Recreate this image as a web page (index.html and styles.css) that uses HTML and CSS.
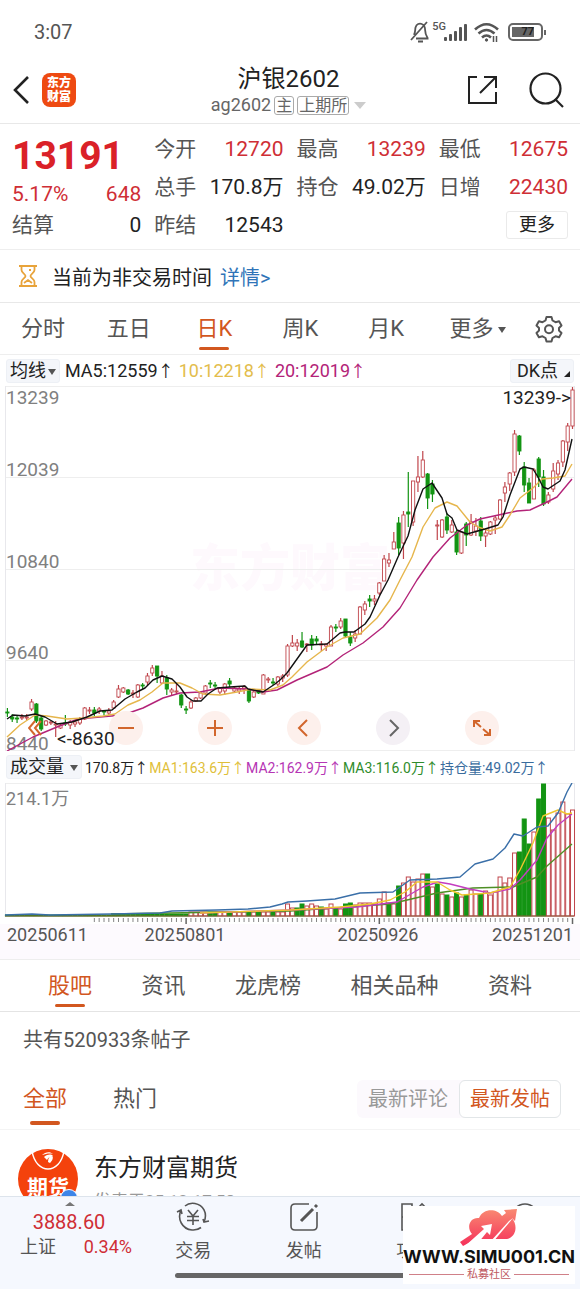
FILE: index.html
```html
<!DOCTYPE html>
<html lang="zh-CN">
<head>
    <meta charset="UTF-8">
    <meta name="viewport" content="width=device-width, initial-scale=1.0">
    <title>沪银2602</title>
    <link rel="stylesheet" href="styles.css">
</head>
<body>
    <div class="status-bar">
        <span class="clock">3:07</span>
        <div class="status-icons">
            <svg width="20" height="24" viewBox="0 0 20 24" fill="none" stroke="#555" stroke-width="1.8">
                <path d="M6 18.500h12.500M4 15c1.500-3 1-5 1.500-7.500 1-3.500 4-4.500 6.300-3.500 2.500 1 3.300 3 3.300 6 0 3 .5 5 2.700 8.500M1 20L17 2M8 21.500h5"/>
            </svg>
            <span class="net">5G</span>
            <svg width="23" height="17" viewBox="0 0 23 17" fill="#555">
                <rect x="0" y="13" width="3" height="4" rx="1"/><rect x="5" y="10" width="3" height="7" rx="1"/><rect x="10" y="7" width="3" height="10" rx="1"/><rect x="15" y="3" width="3" height="14" rx="1"/><rect x="20" y="0" width="3" height="17" rx="1"/>
            </svg>
            <svg class="wifi" width="26" height="21" viewBox="0 0 26 21" fill="none" stroke="#555" stroke-width="2.600">
                <path d="M1 7.500Q12.500-3 24 7.500M4.500 11.500q8-7 16 0M8 15.500q4.500-4 9 0"/><circle cx="12.500" cy="18" r="1.200" fill="#555" stroke-width="1"/><path d="M19.500 14v6M22.500 14v6" stroke-width="1.500"/>
            </svg>
            <span class="battery"><span class="battery-level">77</span></span>
        </div>
    </div>

    <header class="header">
        <div class="header-left">
            <button class="icon-btn" aria-label="返回">
                <svg width="17" height="28" viewBox="0 0 17 28" fill="none" stroke="#222" stroke-width="2.600"><path d="M15 1L2 14l13 13"/></svg>
            </button>
            <div class="app-logo">东方<br>财富</div>
        </div>
        <div class="header-title">
            <h1>沪银2602</h1>
            <div class="contract">ag2602<span class="tag">主</span><span class="tag">上期所</span><span class="drop"></span></div>
        </div>
        <div class="header-right">
            <button class="icon-btn" aria-label="分享">
                <svg width="30" height="30" viewBox="0 0 30 30" fill="none" stroke="#222" stroke-width="2"><path d="M9 2H1v26h27V17M12 18L27 3M16 2h12v11"/></svg>
            </button>
            <button class="icon-btn" aria-label="搜索">
                <svg width="35" height="36" viewBox="0 0 35 36" fill="none" stroke="#222" stroke-width="2.200"><circle cx="16.500" cy="16.500" r="15"/><path d="M26 27l8 8"/></svg>
            </button>
        </div>
    </header>

    <section class="quote">
        <div class="quote-main">
            <div class="price">13191</div>
            <div class="cell up"><span>5.17%</span><span>648</span></div>
            <div class="cell"><span class="name">结算</span><span>0</span></div>
        </div>
        <div class="quote-col">
            <div class="cell"><span class="name">今开</span><span class="up">12720</span></div>
            <div class="cell"><span class="name">总手</span><span>170.8万</span></div>
            <div class="cell"><span class="name">昨结</span><span>12543</span></div>
        </div>
        <div class="quote-col">
            <div class="cell"><span class="name">最高</span><span class="up">13239</span></div>
            <div class="cell"><span class="name">持仓</span><span>49.02万</span></div>
        </div>
        <div class="quote-col">
            <div class="cell"><span class="name">最低</span><span class="up">12675</span></div>
            <div class="cell"><span class="name">日增</span><span class="up">22430</span></div>
            <div class="cell cell-end"><button class="more-btn">更多</button></div>
        </div>
    </section>

    <div class="notice">
        <svg width="20" height="22" viewBox="0 0 20 22" fill="none" stroke="#e8a33a" stroke-width="1.800">
            <path d="M1 1h18M1 21h18M3.500 1v4c0 3 4 4 4 6s-4 3-4 6v4M16.500 1v4c0 3-4 4-4 6s4 3 4 6v4M6 18l4-3 4 3M11 5h2"/>
        </svg>
        <span>当前为非交易时间</span>
        <a href="#">详情&gt;</a>
    </div>

    <nav class="period-tabs">
        <button class="tab">分时</button>
        <button class="tab">五日</button>
        <button class="tab active">日K</button>
        <button class="tab">周K</button>
        <button class="tab">月K</button>
        <button class="tab">更多<span class="caret"></span></button>
        <button class="icon-btn" aria-label="设置">
            <svg width="28" height="28" viewBox="0 0 28 28" fill="none" stroke="#555" stroke-width="2" stroke-linejoin="round">
                <path d="M11.500 2h5l1 3.500 3 1.700 3.600-1L26.500 10.500 24 13v2.500l2.500 2.500-2.400 4.300-3.600-1-3 1.700-1 3.500h-5l-1-3.500-3-1.700-3.600 1L1.500 18 4 15.500V13L1.500 10.500l2.400-4.300 3.600 1 3-1.700z"/><circle cx="14" cy="14.200" r="4"/>
            </svg>
        </button>
    </nav>

    <div class="ma-row">
        <button class="pill">均线<span class="caret"></span></button>
        <span class="ma">MA5:12559<i>↑</i></span>
        <span class="ma ma-yellow">10:12218<i>↑</i></span>
        <span class="ma ma-pink">20:12019<i>↑</i></span>
        <button class="pill pill-dk">DK点<span class="corner"></span></button>
    </div>

    <div class="chart price-chart">
        <div class="chart-brand">东方财富</div>
        <div class="price-axis">
            <div><span>13239</span><span>12039</span></div>
            <div><span>10840</span></div>
            <div><span>9640</span></div>
            <div><span>8440</span></div>
        </div>
        <svg id="priceChart" width="100%" height="365" viewBox="0 0 580 365" preserveAspectRatio="none"></svg>
        <div class="chart-tools">
            <button class="tool tool-plain" aria-label="展开"><svg width="14" height="16" viewBox="0 0 14 16"><path d="M7 1L1 8l6 7M13 1L7 8l6 7"/></svg></button>
            <button class="tool" aria-label="缩小"><svg width="18" height="18" viewBox="0 0 18 18"><path d="M1 9h16"/></svg></button>
            <button class="tool" aria-label="放大"><svg width="18" height="18" viewBox="0 0 18 18"><path d="M1 9h16M9 1v16"/></svg></button>
            <button class="tool" aria-label="左移"><svg width="18" height="18" viewBox="0 0 18 18"><path d="M12 1L4 9l8 8"/></svg></button>
            <button class="tool tool-off" aria-label="右移"><svg width="18" height="18" viewBox="0 0 18 18"><path d="M6 1l8 8-8 8"/></svg></button>
            <button class="tool" aria-label="全屏"><svg width="18" height="18" viewBox="0 0 18 18"><path d="M1 8V2h6M1 2l7 6M17 10v6h-6M17 16l-7-6"/></svg></button>
        </div>
        <span class="mark mark-high">13239-&gt;</span>
        <span class="mark mark-low">&lt;-8630</span>
    </div>

    <div class="vol-row">
        <button class="pill">成交量<span class="caret"></span></button>
        <span>170.8万<i>↑</i></span>
        <span class="v-yellow">MA1:163.6万<i>↑</i></span>
        <span class="v-pink">MA2:162.9万<i>↑</i></span>
        <span class="v-green">MA3:116.0万<i>↑</i></span>
        <span class="v-blue">持仓量:49.02万<i>↑</i></span>
    </div>

    <div class="chart vol-chart">
        <span class="vol-max">214.1万</span>
        <svg id="volChart" width="100%" height="141" viewBox="0 0 580 141" preserveAspectRatio="none"></svg>
    </div>
    <div class="dates">
        <span>20250611</span><span>20250801</span><span>20250926</span><span>20251201</span>
    </div>

    <nav class="forum-tabs">
        <button class="tab active">股吧</button>
        <button class="tab">资讯</button>
        <button class="tab">龙虎榜</button>
        <button class="tab">相关品种</button>
        <button class="tab">资料</button>
    </nav>

    <p class="post-count">共有520933条帖子</p>

    <div class="filter">
        <button class="tab active">全部</button>
        <button class="tab">热门</button>
        <div class="sort">
            <button>最新评论</button>
            <button class="selected">最新发帖</button>
        </div>
    </div>

    <article class="post">
        <div class="avatar">
            <svg width="60" height="60" viewBox="0 0 60 60">
                <circle cx="30" cy="30" r="30" fill="#f4420c"/>
                <path d="M14 2c4 24 28 24 32 0" fill="none" stroke="#fff" stroke-width="1.500"/>
                <path d="M24 6c3-3 8-4 11-1-4-1-7 0-11 1zM26 8c4-3 7-3 9-1-3 0-5 2-6 4zM30 13c0-4 2-6 4-7 2 3 0 6-2 8z" fill="#fff"/>
            </svg>
            <span class="avatar-text">期货</span>
            <span class="badge"></span>
        </div>
        <div>
            <h2>东方财富期货</h2>
            <p>发表于25-12-17:58</p>
        </div>
    </article>

    <footer class="bottom-bar">
        <div class="index">
            <span class="index-caret"></span>
            <div class="index-value">3888.60</div>
            <div class="index-line"><span class="name">上证</span><span class="up">0.34%</span></div>
        </div>
        <button class="action">
            <svg width="34" height="30" viewBox="0 0 34 30"><path d="M5 8C1 17 6 27 16 28q5 .5 9-2.500M28 20c4-9-1-17-9-18.500Q13 .5 9 4M1 10l4-2 1 4M27 17l1 3 5-1M12 8l5 6 5-6M11 14.500h12M11 18.500h12M17 14v9"/></svg>
            <span>交易</span>
        </button>
        <button class="action">
            <svg width="34" height="30" viewBox="0 0 34 30"><path d="M22 2H8Q4 2 4 6v18q0 4 4 4h18q4 0 4-4V10"/><path d="M14 19L26 7M28 5l2-2" stroke-width="3"/></svg>
            <span>发帖</span>
        </button>
        <button class="action">
            <svg width="34" height="30" viewBox="0 0 34 30"><path d="M15 14V2H5v26h10V17M5 15h24v12H19V15M20 7l5-5 5 5-5 5z"/></svg>
            <span>功能</span>
        </button>
        <button class="action" aria-label="我的">
            <svg width="34" height="30" viewBox="0 0 34 30"><circle cx="17" cy="15" r="13"/></svg>
        </button>
        <span class="home-bar"></span>
        <div class="site-mark">
            <svg width="60" height="38" viewBox="0 0 60 38">
                <defs>
                    <linearGradient id="cloud" x1="0" y1="0" x2="0" y2="1"><stop offset="0" stop-color="#f98a72"/><stop offset="1" stop-color="#f5305a"/></linearGradient>
                </defs>
                <path d="M13 26C7 19 11 9 20 10 24 0 38 0 43 8L47 5 45 2 58 1 56 13 53 10C60 19 56 31 46 31H17L4 38 1 34z" fill="url(#cloud)"/>
                <path d="M6 38L25 21l-3-3 11-2-2 11-3-3-9 11zM31 34L50 13l4-3-20 24z" fill="#fff"/>
            </svg>
            <div class="site-url">WWW.SIMU001.CN</div>
            <div class="site-name">私募社区</div>
        </div>
    </footer>

    <script src="chart.js"></script>
</body>
</html>
```

FILE: styles.css
```css
* { box-sizing: border-box; }
body { margin: 0; background: #fff; color: #222; font-family: Roboto, "Noto Sans CJK SC", sans-serif; font-size: 20px; }
button { background: none; border: none; padding: 0; margin: 0; font: inherit; color: inherit; }
h1, h2, p { margin: 0; font-weight: 400; }
i { font-family: "Noto Sans CJK SC", sans-serif; font-size: 16px; font-style: normal; }
svg { display: block; }
.icon-btn { display: flex; justify-content: center; }
.up { color: #cf2e35; }
.name { color: #555; }

/* status bar */
.status-bar { display: flex; justify-content: space-between; align-items: center; height: 64px; padding: 0 34px; color: #555; }
.status-icons { display: flex; align-items: center; }
.net { font-size: 11px; font-weight: 500; align-self: flex-start; margin: 0 -2px 0 2px; }
.wifi { margin: 0 8px 0 7px; }
.battery { position: relative; width: 35px; height: 18px; border: 2px solid #666; border-radius: 5px; padding: 2px; margin-right: 3px; }
.battery::after { content: ""; position: absolute; right: -5px; top: 5px; width: 2px; height: 5px; background: #666; }
.battery-level { display: block; width: 22px; height: 10px; background: #666; color: #222; font-size: 11px; font-weight: 700; line-height: 10px; text-align: right; }

/* header */
.header { display: grid; grid-template-columns: 1fr auto 1fr; align-items: center; height: 60px; padding: 0 16px 8px 13px; border-bottom: 1px solid #e8e8e8; }
.header-left { display: flex; align-items: center; gap: 12px; }
.app-logo { width: 34px; height: 34px; border-radius: 8px; background: #ee4a12; color: #fff; font-size: 12px; font-weight: 900; line-height: 14px; text-align: center; padding-top: 3px; }
.header-title { text-align: center; }
.header-title h1 { font-size: 24px; line-height: 30px; }
.contract { display: flex; align-items: center; gap: 3px; font-size: 18px; line-height: 22px; color: #666; }
.tag { border: 1px solid #aaa; border-radius: 3px; font-size: 16px; line-height: 17px; padding: 0 1px; }
.drop { border: 6px solid transparent; border-top: 7px solid #ccc; border-bottom: 0; margin-left: 2px; }
.header-right { display: flex; justify-content: flex-end; align-items: center; gap: 31px; }

/* quote */
.quote { display: grid; grid-template-columns: repeat(4, 1fr); gap: 13px; padding: 6px 12px 5px; font-size: 21px; line-height: 26px; border-bottom: 1px solid #eee; }
.quote-main { display: grid; grid-template-rows: 52px 24px 38px; }
.quote-col { display: grid; grid-template-rows: repeat(3, 38px); }
.price { font-size: 39px; font-weight: 700; line-height: 52px; color: #da2128; }
.cell { display: flex; justify-content: space-between; align-items: center; white-space: nowrap; }
.cell-end { justify-content: flex-end; }
.more-btn { width: 62px; height: 28px; border: 1px solid #eaeaea; border-radius: 3px; font-size: 18px; line-height: 24px; }

.notice { display: flex; align-items: center; height: 53px; padding: 0 18px; border-bottom: 1px solid #e8e8e8; }
.notice span { margin: 0 8px 0 14px; }
.notice a { color: #2f74b8; text-decoration: none; }

/* tabs */
.tab { position: relative; font-size: 22px; line-height: 32px; color: #555; }
.tab.active { color: #d2571f; }
.tab.active::after { content: ""; position: absolute; left: 50%; bottom: -5px; width: 30px; height: 3px; margin-left: -15px; border-radius: 2px; background: #d2571f; }
.caret { display: inline-block; border: 4px solid transparent; border-top: 6px solid #555; border-bottom: 0; vertical-align: middle; margin-left: 4px; }
.period-tabs { display: grid; grid-template-columns: 15fr 15fr 15fr 15fr 15fr 17fr 8fr; align-items: center; height: 52px; padding-right: 8px; border-bottom: 1px solid #eee; }

.ma-row { display: flex; align-items: center; gap: 5px; height: 31px; padding: 0 6px; font-size: 18px; line-height: 24px; }
.pill { background: #f4f6fa; border: 1px solid #edf0f5; border-radius: 3px; height: 24px; padding: 0 3px; line-height: 20px; font-size: 18px; white-space: nowrap; }
.pill .caret { margin-left: 2px; }
.ma-yellow { color: #e3bd4c; }
.ma-pink { color: #b32378; }
.pill-dk { margin-left: auto; padding-left: 6px; }
.corner { display: inline-block; border-left: 6px solid transparent; border-bottom: 6px solid #222; margin-left: 6px; }

/* charts */
.chart { position: relative; }
.chart-brand { position: absolute; left: 0; right: 0; top: 148px; text-align: center; font-size: 50px; font-weight: 900; line-height: 70px; color: #fef9fd; }
.price-axis { position: absolute; inset: 0 auto 0 6px; display: grid; grid-template-rows: repeat(4, 1fr); color: #808080; font-size: 19px; line-height: 14px; }
.price-axis div { display: flex; flex-direction: column; justify-content: flex-end; }
.price-axis div:first-child { justify-content: space-between; padding-top: 5px; }
#priceChart { position: relative; }
.mark { position: absolute; font-size: 19px; line-height: 22px; }
.mark-high { right: 9px; top: 1px; }
.mark-low { left: 57px; bottom: 1px; }
.chart-tools { position: absolute; left: 28px; bottom: 6px; display: flex; gap: 55px; }
.tool { display: flex; align-items: center; justify-content: center; width: 34px; height: 34px; border-radius: 50%; background: #fdf0ec; }
.tool svg { fill: none; stroke: #d2662c; stroke-width: 2; }
.tool-plain { width: 26px; background: none; justify-content: flex-start; }
.tool-off { background: #f4f0f5; }
.tool-off svg { stroke: #666; }

.vol-row { display: flex; align-items: center; height: 32px; padding: 0 6px; gap: 1px; font-size: 14px; line-height: 24px; white-space: nowrap; }
.vol-row i { font-size: 14px; }
.vol-row .pill { margin-right: 2px; }
.vol-row .pill .caret { margin-left: 6px; }
.v-yellow { color: #dfbf3a; }
.v-pink { color: #b635b4; }
.v-green { color: #2f8c2b; }
.v-blue { color: #3a6c9e; }
.vol-max { position: absolute; left: 6px; top: 5px; font-size: 18px; line-height: 22px; color: #808080; }
.dates { display: flex; height: 36px; padding: 0 7px; font-size: 18px; line-height: 22px; color: #555; background: #fdfafe; border-bottom: 1px solid #eee; }
.dates span:nth-child(2) { margin-left: 10%; }
.dates span:nth-child(3) { margin-left: auto; }
.dates span:nth-child(4) { margin-left: 13%; }

/* forum */
.forum-tabs { display: flex; justify-content: space-between; align-items: center; height: 52px; padding: 0 48px; border-bottom: 1px solid #e4e4e4; }
.post-count { padding: 14px 23px; line-height: 28px; color: #555; }
.filter { display: flex; align-items: center; gap: 46px; height: 62px; padding: 0 19px 0 23px; border-bottom: 1px solid #f4f4f4; }
.filter .tab.active::after { bottom: -10px; height: 4px; }
.sort { display: flex; margin-left: auto; background: #fcf9fd; border-radius: 6px; }
.sort button { height: 38px; padding: 0 10px; line-height: 34px; color: #999; border: 1px solid transparent; border-radius: 6px; }
.sort .selected { color: #d2571f; background: #fff; border-color: #e2e6e8; }
.post { display: flex; gap: 16px; height: 66px; padding: 19px 18px 0; }
.post h2 { font-size: 24px; line-height: 38px; }
.post p { font-size: 17px; line-height: 28px; color: #999; }
.avatar { position: relative; width: 60px; height: 60px; }
.avatar-text { position: absolute; left: 0; right: 0; top: 24px; text-align: center; color: #fff; font-size: 21px; font-weight: 700; line-height: 30px; }
.badge { position: absolute; right: 0; top: 40px; width: 18px; height: 18px; border-radius: 50%; border: 1px solid #fff; background: #3d85e8; }

/* bottom bar */
.bottom-bar { position: fixed; left: 0; right: 0; bottom: 0; display: flex; height: 93px; padding-left: 12px; background: #f5f8fe; border-top: 1px solid #dde4ec; color: #555; font-size: 18px; }
.index { position: relative; flex: 0 0 126px; padding-top: 12px; }
.index-caret { position: absolute; left: 53px; top: 5px; border: 5px solid transparent; border-bottom: 4px solid #777; border-top: 0; }
.index-value { color: #cf2e35; font-size: 20px; line-height: 26px; text-align: center; padding-right: 12px; }
.index-line { display: flex; justify-content: space-between; line-height: 24px; padding: 0 6px 0 8px; }
.action { flex: 1; display: flex; flex-direction: column; align-items: center; padding-top: 5px; line-height: 24px; }
.action svg { fill: none; stroke: #555; stroke-width: 1.600; margin-bottom: 7px; }
.home-bar { position: absolute; left: 50%; bottom: 11px; width: 230px; height: 5px; margin-left: -115px; border-radius: 3px; background: #666; }
.site-mark { position: absolute; right: 5px; bottom: 5px; width: 172px; height: 78px; background: #fff; display: flex; flex-direction: column; align-items: center; padding-top: 2px; }
.site-url { font-family: Inter, sans-serif; font-size: 18px; font-weight: 700; line-height: 22px; color: #111; white-space: nowrap; }
.site-name { display: flex; align-items: center; gap: 3px; align-self: stretch; padding: 0 6px; font-size: 11px; line-height: 13px; color: #c05a62; }
.site-name::before, .site-name::after { content: ""; flex: 1; height: 1px; background: #d08088; }
```

FILE: chart.js
```javascript
const RED = '#c0464c';
const GREEN = '#139413';
const STEP = 4.83;
const START = 7.4;

// [high, body top, body bottom, low, rising]
const candles = [
    [322,326,327,331,0],[328,331,333,336,0],[330,332,333,337,0],[328,331,332,334,1],[328,331,332,334,1],[313,316,323,325,1],
    [317,318,335,337,0],[330,332,343,345,0],[334,335,339,340,1],[335,336,337,339,1],[335,338,339,351,1],[338,339,342,343,1],
    [329,337,338,340,0],[334,336,339,343,1],[334,336,338,341,1],[331,333,337,339,1],[321,322,333,334,1],[321,324,325,328,1],
    [321,324,327,330,0],[321,323,325,328,1],[324,325,326,329,0],[322,325,327,329,1],[314,316,322,323,1],[299,303,311,312,1],
    [301,302,306,307,1],[303,304,308,309,0],[304,307,308,312,1],[298,299,311,312,1],[297,299,300,303,0],[287,290,296,299,1],
    [279,282,287,290,1],[280,280,290,297,0],[285,290,297,298,1],[289,292,303,309,0],[302,304,306,309,1],[297,305,306,308,1],
    [308,309,319,322,0],[320,323,324,328,0],[314,316,322,323,1],[311,312,315,316,1],[306,307,312,313,1],[299,300,307,309,1],
    [294,297,298,302,0],[296,299,300,303,0],[301,302,306,308,1],[297,298,305,309,1],[292,295,298,301,0],[300,302,305,306,1],
    [301,303,305,308,1],[299,301,303,308,1],[303,304,315,317,0],[305,306,311,312,1],[303,304,307,308,0],[288,289,308,308,1],
    [291,293,294,297,1],[292,296,297,299,0],[290,291,298,300,1],[288,290,292,296,1],[258,260,289,291,1],[249,257,260,261,1],
    [253,257,260,265,1],[246,255,261,262,0],[257,258,259,266,1],[249,253,259,264,0],[250,253,255,259,0],[255,258,259,265,1],
    [257,258,260,265,1],[239,241,260,260,1],[238,241,242,246,0],[232,235,241,243,1],[233,233,250,251,0],[246,251,257,260,0],
    [244,248,252,256,1],[220,221,248,248,1],[215,218,224,229,1],[209,213,215,221,0],[209,213,215,219,1],[196,197,207,209,1],
    [169,173,195,195,1],[167,174,177,181,1],[146,156,163,163,1],[131,137,162,169,0],[125,129,157,173,1],[86,126,128,141,0],
    [95,95,136,140,1],[70,91,96,106,1],[65,74,91,92,1],[87,88,112,123,0],[94,98,108,116,0],[134,139,140,154,1],
    [133,134,151,152,1],[127,131,144,148,0],[134,139,146,147,1],[144,146,166,169,0],[145,146,167,168,1],[136,138,149,160,0],
    [128,136,149,150,1],[132,140,145,150,1],[131,135,150,155,0],[144,147,150,161,1],[135,136,148,149,1],[130,132,134,148,1],
    [113,114,133,134,1],[96,101,107,116,1],[86,87,98,105,1],[44,48,86,90,1],[49,50,65,69,0],[76,81,99,106,0],
    [92,97,117,117,0],[82,84,113,113,1],[71,73,91,101,0],[84,91,118,120,0],[106,109,116,118,1],[77,85,103,106,1],
    [74,77,88,94,1],[54,55,76,81,1],[37,40,56,65,1],[1,4,40,43,1]
];

const ma5 = '7,333 13,329 25,330 35,328 45,331 57,338 72,336 87,331 100,325 112,324 125,313 137,306 145,302 153,294 162,290 172,293 180,301 187,311 193,315 201,315 208,308 217,302 230,301 245,300 248,303 263,306 275,298 280,294 287,287 307,259 327,258 340,247 345,246 354,246 365,238 370,231 380,209 388,194 398,171 408,150 415,124 423,103 432,97 442,112 447,128 452,132 457,144 467,148 485,143 498,139 503,131 510,109 520,83 524,81 533,83 538,91 543,101 548,103 560,95 565,84 572,53';
const ma10 = '7,351 20,339 35,329 47,330 67,333 83,332 103,330 115,328 128,319 140,314 152,306 163,297 180,297 192,302 203,308 220,309 237,306 252,303 270,304 283,299 292,291 307,276 327,261 343,252 360,248 377,232 390,214 400,194 412,171 423,141 435,122 447,116 457,120 470,136 478,141 490,145 502,141 510,129 520,112 533,102 542,93 553,92 565,90 572,78';
const ma20 = '7,365 33,351 57,341 78,333 100,331 123,329 143,322 163,312 180,307 200,306 220,302 247,303 263,306 277,304 297,294 327,281 343,269 363,257 383,241 400,222 417,194 433,171 450,152 467,139 480,133 503,128 517,125 530,124 545,117 557,111 572,93';

// bar tops for the last 60 days, negative values are falling days
const recentVolume = [
    121,125,-125,-121,123,121,123,-124,126,121,-125,126,-121,-120,122,120,120,120,121,116,109,-120,121,-103,100,94,99,96,91,-91,
    104,-101,111,-112,114,-110,114,-112,107,111,-111,108,112,109,94,100,95,70,-69,-36,-61,49,-16,-1,35,47,30,19,31,27
];

const oi = '5,132 32,131 50,132 111,131 160,130 172,128 217,127 248,126 270,124 282,121 288,119 307,118 335,116 360,110 393,109 410,97 437,96 460,94 475,81 493,76 505,65 514,51 523,53 537,44 548,43 558,30 567,9 572,0';
const vma1 = '200,130 290,127 340,124 370,121 390,117 405,109 417,99 437,99 450,107 462,112 490,110 510,104 520,87 533,60 543,33 558,27 567,31 572,30';
const vma2 = '200,130 290,127 357,124 397,119 423,104 438,99 450,101 470,106 490,110 510,106 520,97 537,77 547,55 558,42 572,31';
const vma3 = '111,131 290,128 390,121 437,110 473,105 513,104 537,94 547,83 572,61';

function line(points, color, width = 1.4) {
    return `<polyline points="${points}" fill="none" stroke="${color}" stroke-width="${width}" stroke-linejoin="round"/>`;
}

function frame(rows, bottom) {
    const grid = rows.map(y => `<path d="M5 ${y}H574.500" stroke="#eee"/>`).join('');
    return grid + `<path d="M5.500 0V${bottom}M574.500 0V${bottom}" stroke="#e8e8ec"/>`;
}

function drawPrice() {
    let out = frame([0.5, 91.5, 183.5, 274.5, 364.5], 365);
    candles.forEach(([high, top, bottom, low, rising], i) => {
        const x = START + i * STEP;
        const color = rising ? RED : GREEN;
        out += `<path d="M${x} ${high}V${top}M${x} ${bottom}V${low}" stroke="${color}" stroke-width="1.2"/>`;
        out += `<rect x="${x - 1.6}" y="${top}" width="3.2" height="${bottom - top}" fill="${rising ? '#fff' : color}" stroke="${color}" stroke-width="0.9"/>`;
    });
    out += line(ma20, '#b32378') + line(ma10, '#e6b64c') + line(ma5, '#111');
    document.getElementById('priceChart').innerHTML = out;
}

function drawVolume() {
    let out = frame([0.5], 133);
    for (let i = 0; i < candles.length; i++) {
        const x = START + i * STEP;
        let top = i < 22 ? 132 : i < 38 ? 131 : 129;
        let rising = i >= 38 && candles[i][4];
        if (i >= 58) {
            top = Math.abs(recentVolume[i - 58]);
            rising = recentVolume[i - 58] > 0;
        }
        out += `<rect x="${x - 2}" y="${top}" width="4" height="${133 - top}" fill="${rising ? '#fff' : GREEN}" stroke="${rising ? RED : GREEN}"/>`;
        if (i >= 18) {
            const major = i === 37 || i === 77 || i === 117;
            out += `<path d="M${x} 135V${major ? 141 : 139}" stroke="#666" stroke-width="${major ? 1.5 : 0.8}"/>`;
        }
    }
    out += '<path d="M5 133H574" stroke="#8a5a3a"/>';
    out += line(vma3, '#4f8f25') + line(vma2, '#c43cc0') + line(vma1, '#efc62f') + line(oi, '#3a6fa8');
    document.getElementById('volChart').innerHTML = out;
}

drawPrice();
drawVolume();
```
